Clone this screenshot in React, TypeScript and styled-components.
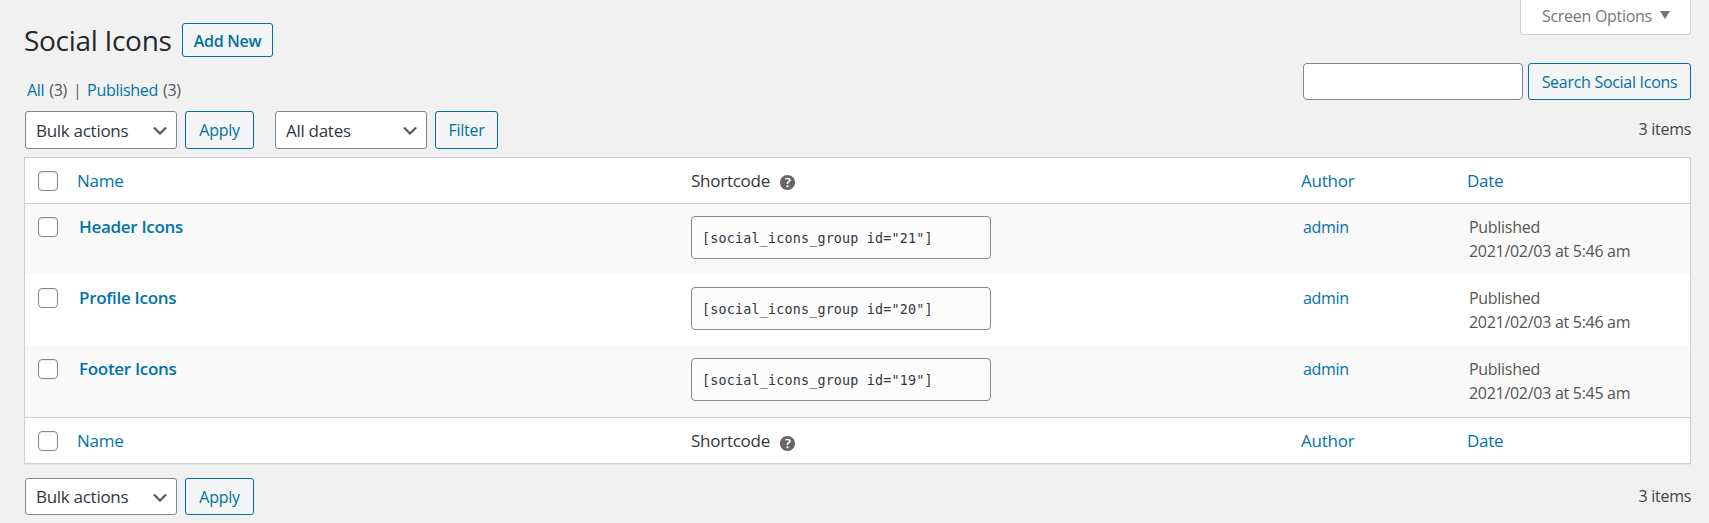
import React from 'react';
import styled, { createGlobalStyle } from 'styled-components';

const GlobalStyle = createGlobalStyle`
  *, *::before, *::after { box-sizing: border-box; }
  body {
    margin: 0;
    background: #f1f1f1;
    color: #444;
    font-family: "Open Sans", "Noto Sans", sans-serif;
    font-size: 16px;
    font-weight: 400;
    letter-spacing: -0.29px;
    line-height: 24px;
  }
  a { color: #0073aa; text-decoration: none; }
  button, input { font: inherit; letter-spacing: inherit; }
`;

const Page = styled.main`
  height: 523px;
  padding: 0 18px 0 24px;
  overflow: hidden;
`;

const Top = styled.header`
  display: flex;
  justify-content: space-between;
  height: 111px;
`;

const Heading = styled.div`
  display: flex;
  align-items: center;
  gap: 10px;
  height: 34px;
  margin-top: 23px;
`;

const Title = styled.h1`
  width: 148px;
  margin: 0;
  color: #23282d;
  font-size: 28px;
  font-weight: 400;
  letter-spacing: -0.3px;
  line-height: 34px;
  white-space: nowrap;
`;

const Button = styled.button<{ $width: number; $height: number; $strong?: boolean }>`
  flex: none;
  width: ${(p) => p.$width}px;
  height: ${(p) => p.$height}px;
  padding: ${(p) => (p.$strong ? '1px 0 0' : '0')};
  border: 1px solid #0071a1;
  border-radius: 3px;
  background: #f3f5f6;
  color: #0071a1;
  font-weight: ${(p) => (p.$strong ? 600 : 400)};
  line-height: 24px;
  white-space: nowrap;
`;

const Views = styled.nav`
  display: flex;
  height: 24px;
  margin: 21px 0 0 3px;
  color: #555;
  white-space: nowrap;
`;

const View = styled.span`
  display: flex;
  gap: 5px;
`;

const Divider = styled.span`
  width: 20px;
  padding-left: 6px;
  color: #666;
`;

const Side = styled.div`
  display: flex;
  flex-direction: column;
  align-items: flex-end;
`;

const ScreenOptions = styled.button`
  display: flex;
  align-items: flex-start;
  gap: 8px;
  width: 171px;
  height: 35px;
  padding: 4px 0 0 21px;
  border: 1px solid #ccd0d4;
  border-top: 0;
  border-radius: 0 0 4px 4px;
  background: #fff;
  color: #72777c;
  line-height: 24px;
  white-space: nowrap;
`;

const Search = styled.div`
  display: flex;
  gap: 5px;
  margin-top: 28px;
`;

const SearchInput = styled.input`
  width: 220px;
  height: 37px;
  border: 1px solid #7e8993;
  border-radius: 4px;
  background: #fff;
`;

const Nav = styled.div<{ $height: number; $top?: number }>`
  display: flex;
  align-items: center;
  gap: 8px;
  height: ${(p) => p.$height}px;
  margin: ${(p) => p.$top ?? 0}px 0 0 1px;
`;

const Select = styled.button<{ $spaced?: boolean }>`
  display: flex;
  align-items: center;
  justify-content: space-between;
  width: 152px;
  height: 100%;
  margin-left: ${(p) => (p.$spaced ? 13 : 0)}px;
  padding: 1px 6px 0 10px;
  border: 1px solid #7e8993;
  border-radius: 3px;
  background: #fff;
  color: #32373c;
  font-size: 17px;
  white-space: nowrap;
`;

const Count = styled.span<{ $lift: number }>`
  margin-left: auto;
  padding-bottom: ${(p) => p.$lift}px;
`;

const Table = styled.section`
  height: 307px;
  margin-top: 8px;
  border: 1px solid #ccd0d4;
  background: #fff;
  box-shadow: 0 1px 1px rgba(0, 0, 0, 0.04);
`;

const columns = `
  display: grid;
  grid-template-columns: 52px 614px 610px 166px 1fr;
`;

const LabelRow = styled.div<{ $edge: 'top' | 'bottom' }>`
  ${columns}
  align-items: center;
  height: 46px;
  border-${(p) => p.$edge}: 1px solid #ccd0d4;
  color: #32373c;
  font-size: 17px;
  letter-spacing: -0.25px;
`;

const LabelCell = styled.div`
  display: flex;
  align-items: center;
`;

const ItemRow = styled.div`
  ${columns}
  height: 71px;
  &:nth-child(even) { background: #f9f9f9; }
`;

const Cell = styled.div`
  padding: 11px 0 0 2px;
  color: #555;
  white-space: pre-line;
`;

const CheckCell = styled.div<{ $top?: number }>`
  display: flex;
  padding: ${(p) => p.$top ?? 0}px 0 0 13px;
`;

const Checkbox = styled.input.attrs({ type: 'checkbox' })`
  appearance: none;
  width: 20px;
  height: 20px;
  margin: 0;
  border: 1px solid #7e8993;
  border-radius: 4px;
  background: #fff;
  box-shadow: inset 0 1px 2px rgba(0, 0, 0, 0.1);
`;

const ItemName = styled.a`
  font-size: 17px;
  font-weight: 600;
  letter-spacing: -0.3px;
`;

const Shortcode = styled.code`
  display: block;
  width: 300px;
  height: 43px;
  margin-top: 12px;
  padding: 7px 10px 0;
  border: 1px solid #7e8993;
  border-radius: 4px;
  background: #fcfcfc;
  color: #32373c;
  font: 13.4px/30px "DejaVu Sans Mono", monospace;
  letter-spacing: 0.18px;
`;

const Help = styled.svg<{ $drop: number }>`
  width: 15px;
  height: 15px;
  margin: ${(p) => p.$drop * 2}px 0 0 10px;
  fill: #666;
`;

const ChevronIcon = styled.svg`
  width: 20px;
  height: 20px;
  margin-top: 1px;
  fill: #555;
`;

const TriangleIcon = styled.svg`
  width: 10px;
  height: 8px;
  margin-top: 7px;
  fill: #72777c;
`;

function HelpIcon({ drop }: { drop: number }) {
  return (
    <Help $drop={drop} viewBox="3 3 14 14">
      <path d="M17 10c0-3.87-3.14-7-7-7-3.87 0-7 3.13-7 7s3.13 7 7 7c3.86 0 7-3.13 7-7zm-6.3 1.48H9.14v-.43c0-.38.08-.7.24-.98s.46-.57.88-.89c.41-.29.68-.53.81-.71.14-.18.2-.39.2-.62 0-.25-.09-.44-.28-.58-.19-.13-.45-.19-.79-.19-.58 0-1.25.15-2 .46l-.64-1.28c.87-.49 1.8-.74 2.77-.74.81 0 1.45.2 1.92.58.48.39.71.91.71 1.55 0 .43-.09.8-.29 1.11-.19.32-.57.67-1.11 1.06-.38.28-.61.49-.71.63-.1.15-.15.34-.15.57v.35zm-1.47 2.74c-.18-.17-.27-.42-.27-.73 0-.33.08-.58.26-.75s.43-.25.77-.25c.32 0 .57.09.75.26s.27.42.27.74c0 .3-.09.55-.27.72-.18.18-.43.27-.75.27-.33 0-.58-.09-.76-.26z" />
    </Help>
  );
}

function Dropdown({ label, spaced }: { label: string; spaced?: boolean }) {
  return (
    <Select $spaced={spaced}>
      {label}
      <ChevronIcon viewBox="0 0 20 20">
        <path d="M5 6l5 5 5-5 2 1-7 7-7-7 2-1z" />
      </ChevronIcon>
    </Select>
  );
}

function Labels({ edge, drop }: { edge: 'top' | 'bottom'; drop: number }) {
  return (
    <LabelRow $edge={edge}>
      <CheckCell><Checkbox aria-label="Select all" /></CheckCell>
      <LabelCell><a href="#name">Name</a></LabelCell>
      <LabelCell>Shortcode<HelpIcon drop={drop} /></LabelCell>
      <LabelCell><a href="#author">Author</a></LabelCell>
      <LabelCell><a href="#date">Date</a></LabelCell>
    </LabelRow>
  );
}

const groups = [
  { id: 21, name: 'Header Icons', date: '2021/02/03 at 5:46 am' },
  { id: 20, name: 'Profile Icons', date: '2021/02/03 at 5:46 am' },
  { id: 19, name: 'Footer Icons', date: '2021/02/03 at 5:45 am' },
];

export default function App() {
  return (
    <Page>
      <GlobalStyle />
      <Top>
        <div>
          <Heading>
            <Title>Social Icons</Title>
            <Button $width={91} $height={34} $strong>Add New</Button>
          </Heading>
          <Views>
            <View><a href="#all">All</a><span>(3)</span></View>
            <Divider>|</Divider>
            <View><a href="#published">Published</a><span>(3)</span></View>
          </Views>
        </div>
        <Side>
          <ScreenOptions>
            Screen Options
            <TriangleIcon viewBox="0 0 10 8"><path d="M0 0h10L5 8z" /></TriangleIcon>
          </ScreenOptions>
          <Search>
            <SearchInput aria-label="Search" />
            <Button $width={163} $height={37}>Search Social Icons</Button>
          </Search>
        </Side>
      </Top>
      <Nav $height={38}>
        <Dropdown label="Bulk actions" />
        <Button $width={69} $height={38}>Apply</Button>
        <Dropdown label="All dates" spaced />
        <Button $width={63} $height={38}>Filter</Button>
        <Count $lift={3}>3 items</Count>
      </Nav>
      <Table>
        <Labels edge="bottom" drop={2} />
        {groups.map((g) => (
          <ItemRow key={g.id}>
            <CheckCell $top={13}><Checkbox aria-label={g.name} /></CheckCell>
            <Cell><ItemName href="#edit">{g.name}</ItemName></Cell>
            <div><Shortcode>{`[social_icons_group id="${g.id}"]`}</Shortcode></div>
            <Cell><a href="#admin">admin</a></Cell>
            <Cell>{`Published\n${g.date}`}</Cell>
          </ItemRow>
        ))}
        <Labels edge="top" drop={3} />
      </Table>
      <Nav $height={37} $top={14}>
        <Dropdown label="Bulk actions" />
        <Button $width={69} $height={37}>Apply</Button>
        <Count $lift={1}>3 items</Count>
      </Nav>
    </Page>
  );
}
